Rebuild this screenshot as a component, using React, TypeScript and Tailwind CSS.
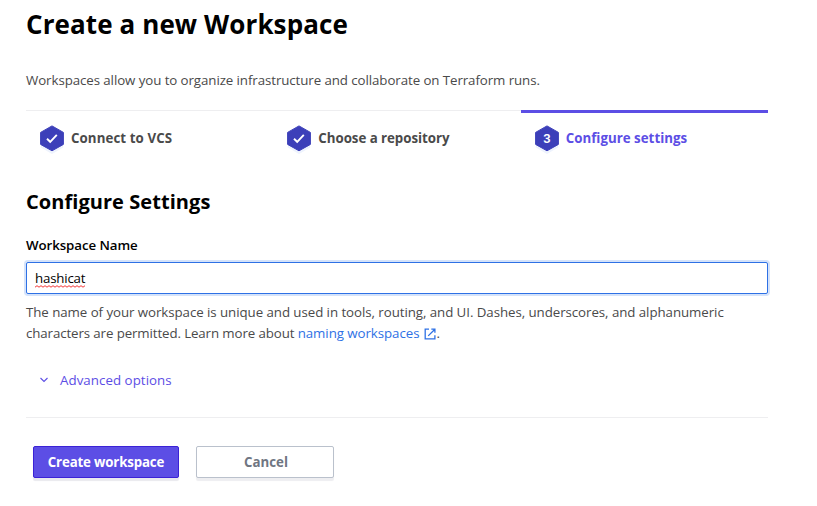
import type { ReactNode } from "react";

function Hexagon({ children }: { children: ReactNode }) {
  return (
    <svg width="26" height="30" viewBox="0 0 26 30" className="block shrink-0">
      <path d="M13 4 L24.2 10 V22.6 L13 29 L1.8 22.6 V10 Z" fill="#eef3fd" />
      <path
        d="M13 0.9 L24.4 7.4 V19.4 L13 25.8 L1.6 19.4 V7.4 Z"
        fill="#3c3fb9"
        stroke="#3c3fb9"
        strokeWidth="1"
        strokeLinejoin="round"
      />
      {children}
    </svg>
  );
}

function Check() {
  return <path d="M8 13.8 L11.2 16.8 L17.8 9.9" fill="none" stroke="#fff" strokeWidth="1.9" />;
}

function Step({ children, label, active, text }: { children: ReactNode; label: string; active?: boolean; text: string }) {
  return (
    <li className={`flex h-14 flex-1 items-start border-t ${active ? "border-[#5c4ee5]" : "border-[#eeeef0]"}`}>
      <div className={`flex h-14 w-full items-start pl-[13px] ${active ? "border-t-2 border-[#5c4ee5] pt-[12px]" : "pt-[14px]"}`}>
        <Hexagon>{children}</Hexagon>
        <span className={`ml-[6px] mt-[3px] whitespace-nowrap leading-5 font-bold ${text}`}>{label}</span>
      </div>
    </li>
  );
}

export default function App() {
  return (
    <main className="h-[506px] w-[817px] overflow-hidden bg-white pl-[26px] font-['Open_Sans','Noto_Sans',sans-serif] text-[#4a4a4a]">
      <div className="w-[742px]">
        <h1 className="pt-[6px] text-[26px] leading-9 font-bold tracking-[0.1px] text-black">
          <span className="whitespace-nowrap">Create a new Workspace</span>
        </h1>
        <p className="mt-[28px] text-[13.3px] leading-5 tracking-[-0.08px] whitespace-nowrap">
          Workspaces allow you to organize infrastructure and collaborate on Terraform runs.
        </p>
        <ol className="mt-[20px] flex">
          <Step label="Connect to VCS" text="text-[13.3px] tracking-[0.08px] text-[#4a4a4a]"><Check /></Step>
          <Step label="Choose a repository" text="text-[13.3px] tracking-[-0.04px] text-[#4a4a4a]"><Check /></Step>
          <Step label="Configure settings" text="text-[13.3px] tracking-[0.02px] text-[#5c4ee5]" active>
            <text x="13" y="18" textAnchor="middle" fill="#fff" fontSize="13" fontWeight="600" fontFamily="Roboto, sans-serif">3</text>
          </Step>
        </ol>
        <h2 className="mt-[22px] text-[20px] leading-7 font-bold tracking-[0.06px] text-black">Configure Settings</h2>
        <div className="mt-[19px] text-[13.3px] leading-5 font-semibold tracking-[-0.08px] text-black">Workspace Name</div>
        <div className="mt-[7px] flex h-8 items-center rounded-[2px] border border-[#2e71e5] bg-white pl-[8px] text-[13.3px] text-black shadow-[0_0_0_2px_#d5e3fa]">
          <span className="relative leading-5 tracking-[-0.2px]">
            hashicat
            <svg width="50" height="3" viewBox="0 0 50 3" className="absolute left-0 top-[17px]">
              <path d="M0 2.2 L2 0.7 L4 2.2 L6 0.7 L8 2.2 L10 0.7 L12 2.2 L14 0.7 L16 2.2 L18 0.7 L20 2.2 L22 0.7 L24 2.2 L26 0.7 L28 2.2 L30 0.7 L32 2.2 L34 0.7 L36 2.2 L38 0.7 L40 2.2 L42 0.7 L44 2.2 L46 0.7 L48 2.2 L50 0.7" fill="none" stroke="#f02020" strokeWidth="0.9" />
            </svg>
          </span>
        </div>
        <p className="mt-[8px] text-[13.3px] leading-[21px] whitespace-nowrap">
          <span className="block tracking-[-0.06px]">The name of your workspace is unique and used in tools, routing, and UI. Dashes, underscores, and alphanumeric</span>
          <span className="flex">
            <span className="tracking-[-0.11px]">characters are permitted. Learn more about&nbsp;</span>
            <span className="tracking-[-0.06px] text-[#2e71e5]">naming workspaces</span>
            <svg width="12" height="12" viewBox="0 0 12 12" className="ml-[5px] mt-[5px]">
              <path d="M5 1.2 H1.2 V10.9 H10.9 V7.2 M7.3 1.2 H10.9 V4.8 M10.9 1.2 L4.2 7.9" fill="none" stroke="#2e71e5" strokeWidth="1.3" />
            </svg>
            <span>.</span>
          </span>
        </p>
        <div className="mt-[26px] flex h-5 items-center pl-[14px] text-[13.3px] text-[#5c4ee5]">
          <svg width="8" height="6" viewBox="0 0 8 6"><path d="M0.5 1 L4 4.5 L7.5 1" fill="none" stroke="#5c4ee5" strokeWidth="1.1" /></svg>
          <span className="ml-[12px] leading-5 tracking-[0.05px]">Advanced options</span>
        </div>
        <hr className="mt-[27px] border-t border-[#eeeef0]" />
        <div className="mt-[28px] flex gap-[17px] pl-[7px] text-[13.3px] font-bold">
          <button className="h-8 w-[146px] rounded-[2px] border border-[#3b22d6] bg-[#5c4ee5] pt-[2px] tracking-[-0.17px] whitespace-nowrap text-white shadow-[0_3px_1px_#e9e9ee]">Create workspace</button>
          <button className="h-8 w-[138px] rounded-[2px] border border-[#bac1cc] bg-white pt-[2px] pl-[2px] text-[#6f7682] shadow-[0_3px_1px_#eeeef1]">Cancel</button>
        </div>
      </div>
    </main>
  );
}
